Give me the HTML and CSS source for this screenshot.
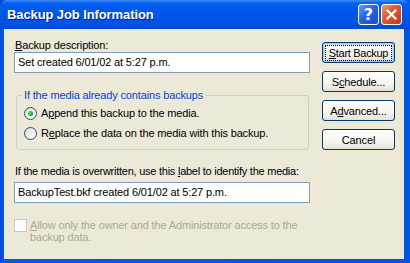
FILE: index.html
```html
<!DOCTYPE html>
<html>
<head>
<meta charset="utf-8">
<link rel="stylesheet" href="styles.css">
</head>
<body>
<div class="window">
  <div class="titlebar">
    <span class="title">Backup Job Information</span>
    <div class="tbtns">
      <span class="tb help">?</span>
      <span class="tb close"><svg width="13" height="13" viewBox="0 0 13 13"><path d="M2.5 2.5 L10.5 10.5 M10.5 2.5 L2.5 10.5" stroke="#fff" stroke-width="2.2" stroke-linecap="square"/></svg></span>
    </div>
  </div>
  <div class="client">
    <div class="main">
      <div class="lbl lbl-first"><u>B</u>ackup description:</div>
      <div class="edit">Set created 6/01/02 at 5:27 p.m.</div>
      <div class="group">
        <div class="legend">If the media already contains backups</div>
        <div class="radio-row"><span class="radio checked"><span class="dot"></span></span><span>A<u>p</u>pend this backup to the media.</span></div>
        <div class="radio-row"><span class="radio"></span><span>R<u>e</u>place the data on the media with this backup.</span></div>
      </div>
      <div class="lbl lbl-second">If the media is overwritten, use this <u>l</u>abel to identify the media:</div>
      <div class="edit edit-second">BackupTest.bkf created 6/01/02 at 5:27 p.m.</div>
      <div class="check-row">
        <span class="check"></span>
        <span class="check-text"><u>A</u>llow only the owner and the Administrator access to the<br>backup data.</span>
      </div>
    </div>
    <div class="buttons">
      <div class="btn default"><span class="focus"><u>S</u>tart Backup</span></div>
      <div class="btn">S<u>c</u>hedule...</div>
      <div class="btn">A<u>d</u>vanced...</div>
      <div class="btn">Cancel</div>
    </div>
  </div>
</div>
</body>
</html>
```

FILE: styles.css
```css
html, body {
  margin: 0;
  padding: 0;
  background: #0052E0;
}

.window {
  width: 410px;
  height: 263px;
  display: flex;
  flex-direction: column;
  font-family: "Liberation Sans", Arial, sans-serif;
  font-size: 11px;
  color: #000;
  background: linear-gradient(to right, #0041C8 0, #0058EA 2px, #0055E5 100%);
}

.titlebar {
  height: 29px;
  display: flex;
  align-items: center;
  justify-content: space-between;
  background: linear-gradient(to bottom, #3D8EF8 0, #0A62F1 3px, #0059EE 7px, #0056E8 50%, #0053E1 80%, #0049D4 100%);
  border-radius: 7px 7px 0 0;
  padding: 0 8px 0 7px;
}

.title {
  color: #fff;
  font-weight: bold;
  font-size: 13px;
  text-shadow: 1px 1px 0 #0A1E8C;
  letter-spacing: -0.1px;
}

.tbtns {
  display: flex;
  gap: 2px;
}

.tb {
  width: 19px;
  height: 19px;
  border: 1px solid #fff;
  border-radius: 3px;
  display: flex;
  align-items: center;
  justify-content: center;
  color: #fff;
}

.help {
  background: linear-gradient(135deg, #5E9BFF 0, #2663EA 45%, #1A4ED6 100%);
  font-weight: bold;
  font-size: 16px;
  font-family: "DejaVu Sans", sans-serif;
}

.close {
  background: linear-gradient(135deg, #F29A7C 0, #E15A34 40%, #C2381A 100%);
}

.client {
  flex: 1;
  background: #ECE9D8;
  margin: 0 6px 4px 4px;
  display: flex;
  padding: 0 0 0 10px;
  letter-spacing: -0.15px;
}

.main {
  width: 296px;
  display: flex;
  flex-direction: column;
}

.lbl {
  line-height: 13px;
  padding-left: 1px;
  white-space: nowrap;
}

.lbl-first {
  margin-top: 10px;
}

.edit {
  height: 19px;
  border: 1px solid #7F9DB9;
  background: #fff;
  line-height: 19px;
  padding-left: 3px;
}

.group {
  margin: 22px 1px 0 2px;
  border: 1px solid #D0D0BF;
  border-radius: 3px;
  height: 46px;
  position: relative;
  padding: 7px 0 0 7px;
}

.legend {
  position: absolute;
  top: -7px;
  left: 5px;
  padding: 0 2px;
  background: #ECE9D8;
  color: #0046D5;
  line-height: 13px;
}

.radio-row {
  display: flex;
  align-items: center;
  height: 20px;
  gap: 4px;
}

.radio {
  width: 11px;
  height: 11px;
  border: 1px solid #1C5180;
  border-radius: 50%;
  background: linear-gradient(135deg, #DCDCD3 0, #F4F4F0 60%, #fff 100%);
  display: flex;
  align-items: center;
  justify-content: center;
}

.dot {
  width: 5px;
  height: 5px;
  border-radius: 50%;
  background: radial-gradient(circle at 35% 35%, #6BDB6B 0, #21A121 70%);
}

.lbl-second {
  margin-top: 15px;
  letter-spacing: -0.25px;
}

.edit-second {
  margin-top: 4px;
}

.check-row {
  display: flex;
  margin-top: 16px;
  color: #ACA899;
}

.check {
  width: 11px;
  height: 11px;
  border: 1px solid #CAC8BB;
  background: #fff;
  margin-right: 3px;
  flex: none;
}

.check-text {
  line-height: 12px;
  white-space: nowrap;
}

.buttons {
  margin-left: 12px;
  padding-top: 13px;
  display: flex;
  flex-direction: column;
  gap: 8px;
}

.btn {
  width: 71px;
  height: 19px;
  border: 1px solid #003C74;
  border-radius: 3px;
  background: linear-gradient(to bottom, #FFFFFF 0, #F5F4EF 60%, #E3E1D6 100%);
  display: flex;
  align-items: center;
  justify-content: center;
  box-sizing: content-box;
}

.btn.default {
  box-shadow: inset 0 0 0 1px #A9C4F2, inset 0 0 0 2px #CEDCF7;
}

.focus {
  width: 65px;
  height: 14px;
  outline: 1px dotted #000;
  outline-offset: 0;
  line-height: 14px;
  text-align: center;
  letter-spacing: -0.3px;
  white-space: nowrap;
}
```
